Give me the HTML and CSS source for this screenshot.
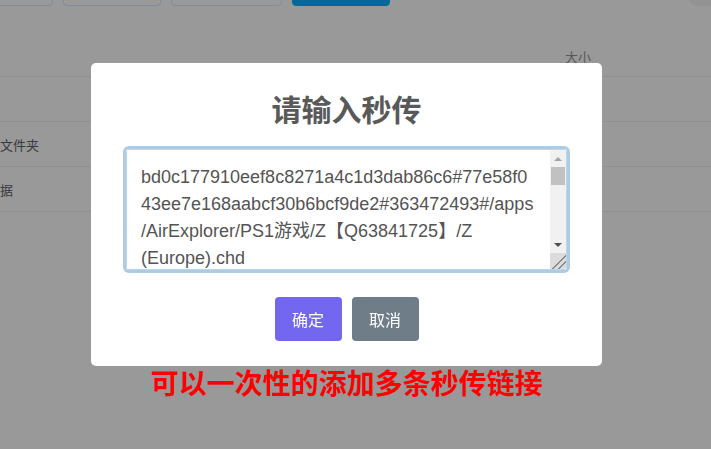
FILE: index.html
```html
<!DOCTYPE html>
<html lang="zh-CN">
<head>
    <meta charset="UTF-8">
    <meta name="viewport" content="width=device-width, initial-scale=1.0">
    <title>秒传</title>
    <link rel="stylesheet" href="styles.css">
</head>
<body>
    <div class="toolbar">
        <button class="tool-btn w-99" title="上传"></button>
        <button class="tool-btn w-98" title="新建文件夹"></button>
        <button class="tool-btn w-111" title="离线下载"></button>
        <button class="tool-btn w-98 primary" title="秒传"></button>
        <div class="avatar"></div>
    </div>

    <div class="file-list">
        <div class="row head">
            <span class="col-name"></span>
            <span class="col-size">大小</span>
        </div>
        <div class="row">
            <span class="col-name"></span>
            <span class="col-size"></span>
        </div>
        <div class="row">
            <span class="col-name">文件夹</span>
            <span class="col-size"></span>
        </div>
        <div class="row">
            <span class="col-name">据</span>
            <span class="col-size"></span>
        </div>
    </div>

    <div class="overlay">
        <div class="popup">
            <h2 class="popup-title">请输入秒传</h2>
            <div class="link-box">
                <textarea class="link-input" autofocus spellcheck="false">bd0c177910eef8c8271a4c1d3dab86c6#77e58f0
43ee7e168aabcf30b6bcf9de2#363472493#/apps
/AirExplorer/PS1游戏/Z【Q63841725】/Z
(Europe).chd
e8a1f4c9d27b3065ab91c4e7f20d8b53#5c7d2e91a0b4f836c1e9d7a25b3f0c84#421786304#/apps/AirExplorer/PS1游戏/F1 2000 (Europe).chd
3f9b02d7c64e81a5b9c0d2e7f41a6835#a07c4e9d1b28f53e6c90d7b2a4e1f835#298452736#/apps/AirExplorer/PS1游戏/Ape Escape (Europe).chd</textarea>
                <div class="scrollbar">
                    <div class="sb-btn"><span class="arrow up"></span></div>
                    <div class="sb-track"><div class="sb-thumb"></div></div>
                    <div class="sb-btn"><span class="arrow down"></span></div>
                    <div class="sb-resizer"></div>
                </div>
            </div>
            <div class="actions">
                <button class="btn confirm">确定</button>
                <button class="btn cancel">取消</button>
            </div>
        </div>
        <div class="tip">可以一次性的添加多条秒传链接</div>
    </div>
</body>
</html>
```

FILE: styles.css
```css
* {
    margin: 0;
    padding: 0;
    box-sizing: border-box;
}

body {
    font-family: "Noto Sans CJK SC", "Liberation Sans", sans-serif;
    background: #fff;
    color: #606266;
    overflow: hidden;
}

/* page behind the dialog */
.toolbar {
    display: flex;
    align-items: flex-end;
    gap: 10px;
    height: 36px;
    margin: -30px -17px 0 -46px;
}

.tool-btn {
    height: 36px;
    background: #fff;
    border: 1px solid #d0eeff;
    border-radius: 4px;
}

.tool-btn.primary {
    background: #08aeff;
    border-color: #08aeff;
}

.w-98 { width: 98px; }
.w-99 { width: 99px; }
.w-111 { width: 111px; }

.avatar {
    margin-left: auto;
    width: 40px;
    height: 40px;
    border-radius: 10px;
    background: #f5f5f5;
}

.file-list {
    margin-top: 27px;
    font-size: 13px;
}

.row {
    display: grid;
    grid-template-columns: 1fr 146px;
    align-items: center;
    height: 45px;
    border-bottom: 1px solid #eee;
}

.row.head {
    height: 44px;
    padding-top: 4px;
    color: #909399;
}

/* dialog */
.overlay {
    position: fixed;
    inset: 0;
    background: rgba(0, 0, 0, 0.4);
    display: flex;
    flex-direction: column;
    align-items: center;
    padding: 63px 18px 0 0;
}

.popup {
    width: 511px;
    background: #fff;
    border-radius: 5px;
    padding: 27px 0 25px;
    display: flex;
    flex-direction: column;
    align-items: center;
}

.popup-title {
    font-size: 30px;
    line-height: 36px;
    font-weight: 700;
    color: #595959;
}

.link-box {
    display: flex;
    margin-top: 23px;
    width: 441px;
    height: 121px;
    border: 1px solid #b4dbed;
    border-radius: 3px;
    box-shadow: 0 0 0 3px rgba(100, 150, 200, 0.5);
    overflow: hidden;
}

.link-input {
    flex: 1;
    padding: 14px 10px 14px 14px;
    border: none;
    outline: none;
    font-family: "Liberation Sans", "Noto Sans CJK SC", sans-serif;
    font-size: 18px;
    line-height: 27px;
    color: #545454;
    caret-color: #333;
    overflow: hidden;
    resize: none;
}

/* classic scrollbar drawn next to the textarea */
.scrollbar {
    width: 16px;
    display: flex;
    flex-direction: column;
    background: #f1f1f1;
}

.sb-btn {
    height: 17px;
    display: flex;
    align-items: center;
    justify-content: center;
}

.arrow {
    width: 0;
    height: 0;
    border-left: 4px solid transparent;
    border-right: 4px solid transparent;
}

.arrow.up {
    border-bottom: 4px solid #a3a3a3;
}

.arrow.down {
    border-top: 4px solid #505050;
}

.sb-track {
    flex: 1;
}

.sb-thumb {
    height: 18px;
    margin: 0 1px;
    background: #c1c1c1;
}

.sb-resizer {
    height: 16px;
    background:
        linear-gradient(135deg, transparent 56%, #8a8a8a 56% 62%, transparent 62% 74%, #8a8a8a 74% 80%, transparent 80%),
        #dcdcdc;
}

.actions {
    display: flex;
    gap: 10px;
    margin-top: 27px;
}

.btn {
    width: 67px;
    height: 44px;
    border: none;
    border-radius: 4px;
    color: #fff;
    font-family: "Noto Sans CJK SC", sans-serif;
    font-size: 16px;
    line-height: 24px;
    cursor: pointer;
}

.btn.confirm {
    background: #7367f0;
}

.btn.cancel {
    background: #6e7d88;
}

.tip {
    font-size: 28px;
    line-height: 1.2;
    font-weight: 700;
    color: #ff0000;
}
```
